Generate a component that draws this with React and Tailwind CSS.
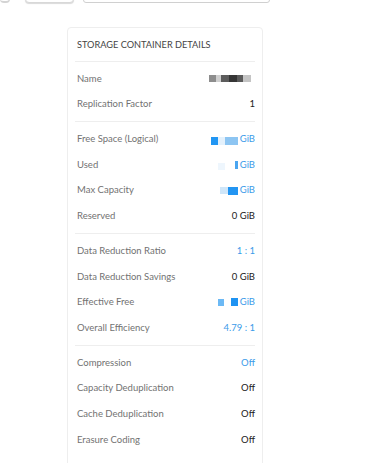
const blue = 'text-[#3b9be9]'

function Mosaic({ blocks }) {
  return (
    <div className="flex items-center">
      {blocks.map((b, i) => (
        <div key={i} className={b} />
      ))}
    </div>
  )
}

function Row({ label, children }) {
  return (
    <div className="h-[25.7px] flex items-center justify-between pl-[2px]">
      <span className="text-[#727272]">{label}</span>
      <div className="flex items-center">{children}</div>
    </div>
  )
}

function Gib({ blocks }) {
  return (
    <>
      <Mosaic blocks={blocks} />
      <span className={`${blue} ml-[2px]`}>GiB</span>
    </>
  )
}

function Section({ children, last }) {
  return (
    <div className={`pt-[4px] ${last ? 'pb-[20px]' : 'pb-[4px] border-b border-[#eeeeee]'}`}>{children}</div>
  )
}

export default function App() {
  return (
    <div className="w-[391px] h-[463px] overflow-hidden bg-white" style={{ fontFamily: 'Lato, "Open Sans", sans-serif' }}>
      {/* toolbar above, mostly scrolled out of view */}
      <div className="flex items-end gap-[15px] h-[30px] -mt-[27px]">
        <div className="w-[10px] h-full rounded-b-[4px] border-b-[2px] border-r border-[#d4d4d4]" />
        <div className="w-[49px] h-full rounded-[4px] border border-[#d8d8d8] shadow-[0_1px_1px_rgba(0,0,0,0.15)] bg-white" />
        <div className="w-[187px] ml-[-6px] h-full rounded-[3px] border border-[#d0d0d0] bg-white" />
      </div>

      <div className="ml-[67px] mt-[24px] w-[196px] border border-[#eeeeee] rounded-[4px] px-[7px] text-[9.5px] text-[#222]">
        <div className="h-[34px] flex items-center pl-[2px] border-b border-[#eeeeee] text-[#444] text-[9.2px]">
          STORAGE CONTAINER DETAILS
        </div>

        <Section>
          <Row label="Name">
            <Mosaic blocks={[
              'w-[7px] h-[7px] bg-[#8d8d8d]',
              'w-[5px] h-[7px] bg-[#cfcfcf]',
              'w-[8px] h-[7px] bg-[#5c5c5c]',
              'w-[8px] h-[7px] bg-[#353535]',
              'w-[6px] h-[7px] bg-[#5a5a5a]',
              'w-[8px] h-[7px] bg-[#c4c4c4]',
              'w-[4px] h-[7px]',
            ]} />
          </Row>
          <Row label="Replication Factor"><span>1</span></Row>
        </Section>

        <Section>
          <Row label="Free Space (Logical)">
            <Gib blocks={[
              'w-[7px] h-[8px] bg-[#2196f3] mt-[4px]',
              'w-[7px] h-[8px] bg-[#e4f1fc] mt-[4px]',
              'w-[13px] h-[8px] bg-[#8dc5f2] mt-[4px]',
            ]} />
          </Row>
          <Row label="Used">
            <Gib blocks={[
              'w-[7px] h-[7px] bg-[#eef6fd] mt-[3px]',
              'w-[10px] h-[7px]',
              'w-[3px] h-[8px] bg-[#4aa5f0]',
            ]} />
          </Row>
          <Row label="Max Capacity">
            <Gib blocks={[
              'w-[8px] h-[7px] bg-[#cfe6f9]',
              'w-[10px] h-[8px] bg-[#2295f2]',
            ]} />
          </Row>
          <Row label="Reserved"><span>0 GiB</span></Row>
        </Section>

        <Section>
          <Row label="Data Reduction Ratio"><span className={blue}>1 : 1</span></Row>
          <Row label="Data Reduction Savings"><span>0 GiB</span></Row>
          <Row label="Effective Free">
            <Gib blocks={[
              'w-[6px] h-[7px] bg-[#6cb9f5]',
              'w-[7px] h-[7px]',
              'w-[7px] h-[8px] bg-[#1f93f2]',
            ]} />
          </Row>
          <Row label="Overall Efficiency"><span className={blue}>4.79 : 1</span></Row>
        </Section>

        <Section last>
          <Row label="Compression"><span className={blue}>Off</span></Row>
          <Row label="Capacity Deduplication"><span>Off</span></Row>
          <Row label="Cache Deduplication"><span>Off</span></Row>
          <Row label="Erasure Coding"><span>Off</span></Row>
        </Section>
      </div>
    </div>
  )
}
